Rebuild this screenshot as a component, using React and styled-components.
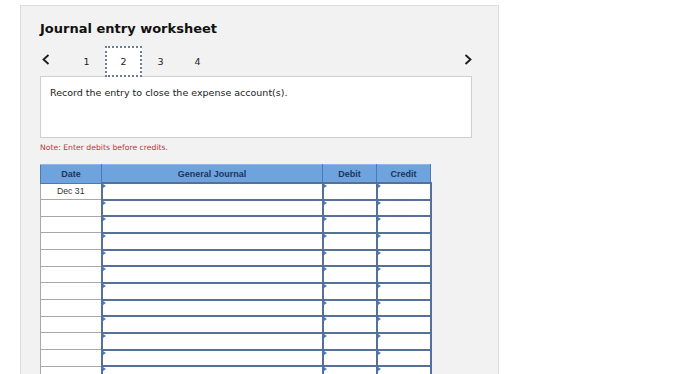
import React from "react";
import styled, { createGlobalStyle } from "styled-components";

const Global = createGlobalStyle`
  html, body { margin: 0; padding: 0; background: #ffffff; overflow: hidden; }
  body { font-family: "DejaVu Sans", Verdana, sans-serif; }
`;

const Panel = styled.div`
  margin: 5px 0 0 20px;
  width: 432px;
  height: 400px;
  padding: 0 26px 0 19px;
  box-sizing: content-box;
  background: #f2f2f2;
  border: 1px solid #dcdcdc;
  border-bottom: none;
`;

const Title = styled.h1`
  margin: 0;
  padding-top: 14px;
  font-family: "DejaVu Sans", Verdana, sans-serif;
  font-weight: bold;
  font-size: 13px;
  line-height: 18px;
  color: #111;
`;

const Nav = styled.div`
  display: flex;
  align-items: center;
  height: 32px;
  margin-top: 7px;
`;

const Arrow = styled.div`
  width: ${(p) => p.$w}px;
  display: flex;
  justify-content: ${(p) => (p.$right ? "flex-end" : "flex-start")};
  padding: ${(p) => (p.$right ? "0 0 4px 0" : "0 0 4px 2px")};
  box-sizing: border-box;
`;

const Tab = styled.div`
  width: 37px;
  height: 31px;
  box-sizing: border-box;
  display: flex;
  align-items: center;
  justify-content: center;
  font-size: 9.5px;
  color: #222;
  font-family: "DejaVu Sans", Verdana, sans-serif;
  background: ${(p) => (p.$active ? "#ffffff" : "transparent")};
  border: 2px dotted ${(p) => (p.$active ? "#6d7b93" : "transparent")};
  padding-top: 1px;
  position: relative;
  z-index: 1;
`;

const Spacer = styled.div`
  flex: 1;
`;

const Instruction = styled.div`
  height: 62px;
  box-sizing: border-box;
  background: #ffffff;
  border: 1px solid #cfcfcf;
  padding: 10px 9px;
  font-size: 9.5px;
  line-height: 12px;
  color: #1a1a1a;
  margin-top: -1px;
`;

const Note = styled.div`
  margin-top: 5px;
  font-size: 7.7px;
  line-height: 10px;
  color: #b23a3a;
`;

const Table = styled.table`
  margin-top: 11px;
  border-collapse: collapse;
  table-layout: fixed;
  width: 388px;
  font-family: "Liberation Sans", Arial, sans-serif;
`;

const Th = styled.th`
  width: ${(p) => p.$w}px;
  height: 17px;
  padding: 0;
  background: #6fa3de;
  color: #1c355c;
  font-size: 9px;
  font-weight: bold;
  text-align: center;
  border: 1px solid #4b79b4;
  border-top: 1px solid #8fb6e6;
`;

const DateCell = styled.td`
  height: 15px;
  padding: 0;
  background: #ffffff;
  border: 1px solid #a8a8a8;
  font-size: 8.7px;
  color: #333;
  text-align: center;
  vertical-align: middle;
`;

const InputCell = styled.td`
  height: 14.67px;
  padding: 0;
  background: #ffffff;
  border: 2px solid #55719a;
  position: relative;
  &::before {
    content: "";
    position: absolute;
    left: 0;
    top: 0;
    border-left: 3px solid #4a7cc4;
    border-top: 2px solid transparent;
    border-bottom: 2px solid transparent;
  }
`;

const Chevron = ({ dir }) => (
  <svg width="8" height="11" viewBox="0 0 8 11">
    <polyline
      points={dir === "left" ? "6.5,1 1.5,5.5 6.5,10" : "1.5,1 6.5,5.5 1.5,10"}
      fill="none"
      stroke="#1a1a1a"
      strokeWidth="1.8"
    />
  </svg>
);

const rows = Array.from({ length: 12 }, (_, i) => (i === 0 ? "Dec 31" : ""));

export default function App() {
  return (
    <>
      <Global />
      <Panel>
        <Title>Journal entry worksheet</Title>
        <Nav>
          <Arrow $w={28}>
            <Chevron dir="left" />
          </Arrow>
          {[1, 2, 3, 4].map((n) => (
            <Tab key={n} $active={n === 2}>
              {n}
            </Tab>
          ))}
          <Spacer />
          <Arrow $w={10} $right>
            <Chevron dir="right" />
          </Arrow>
        </Nav>
        <Instruction>Record the entry to close the expense account(s).</Instruction>
        <Note>Note: Enter debits before credits.</Note>
        <Table>
          <thead>
            <tr>
              <Th $w={60}>Date</Th>
              <Th $w={220}>General Journal</Th>
              <Th $w={53}>Debit</Th>
              <Th $w={53}>Credit</Th>
            </tr>
          </thead>
          <tbody>
            {rows.map((d, i) => (
              <tr key={i}>
                <DateCell>{d}</DateCell>
                <InputCell />
                <InputCell />
                <InputCell />
              </tr>
            ))}
          </tbody>
        </Table>
      </Panel>
    </>
  );
}
